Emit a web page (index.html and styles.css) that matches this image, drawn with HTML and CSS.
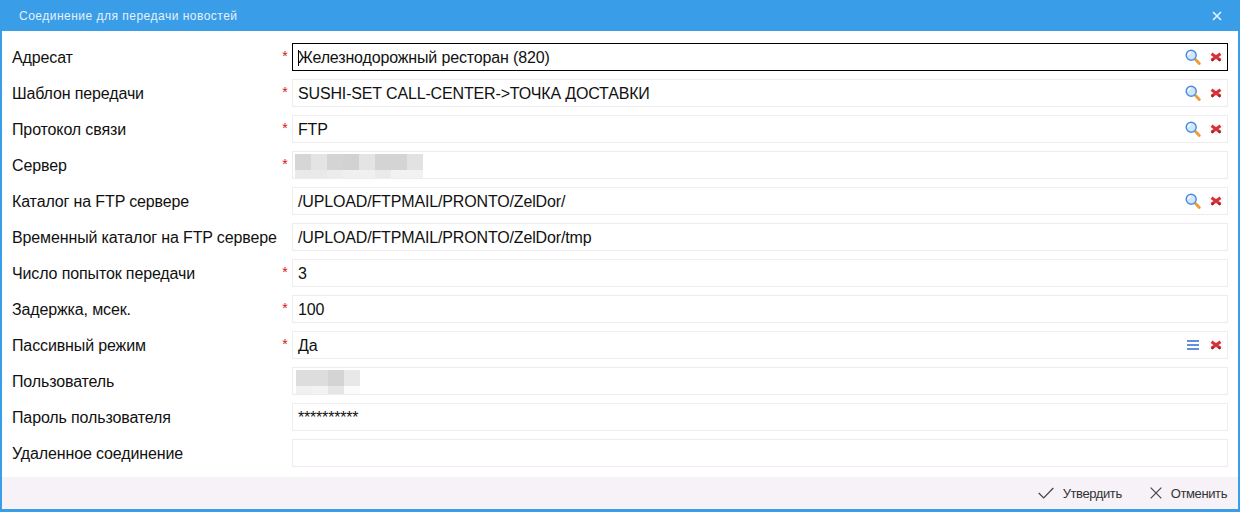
FILE: index.html
```
<!DOCTYPE html>
<html lang="ru">
<head>
<meta charset="utf-8">
<title>Соединение для передачи новостей</title>
<link rel="stylesheet" href="styles.css">
</head>
<body>
<svg class="defs" width="0" height="0" aria-hidden="true">
  <defs>
    <symbol id="i-search" viewBox="0 0 16 16">
      <path d="M10.800 10.800l3.500 3.700" fill="none" stroke="#ee9a38" stroke-width="2.800" stroke-linecap="round"/>
      <circle cx="6.200" cy="6.300" r="5" fill="#cfe6fb" stroke="#4a8ddf" stroke-width="1.500"/>
      <path d="M3.200 6.200a3.100 3.100 0 0 1 2.800-3" fill="none" stroke="#fff" stroke-width="1.400"/>
    </symbol>
    <symbol id="i-del" viewBox="0 0 12 12">
      <path d="M1.500 2.800l9 6.400M10.500 2.800l-9 6.400" fill="none" stroke="#dc3038" stroke-width="3"/>
      <path d="M3.500 8.300L1.500 9.800M8.500 8.300l2 1.500" stroke="#8c2a2e" stroke-width="2"/>
    </symbol>
    <symbol id="i-list" viewBox="0 0 12 10">
      <path d="M0 1h12M0 5h12M0 9h12" stroke="#6490d8" stroke-width="1.800"/>
    </symbol>
  </defs>
</svg>
<div class="window">
  <header class="titlebar">
    <span class="title">Соединение для передачи новостей</span>
    <svg class="close" width="10" height="10" viewBox="0 0 10 10"><path d="M1 1l8 8M9 1l-8 8" stroke="#e4f1fc" stroke-width="1.700"/></svg>
  </header>
  <main class="form">
    <div class="row">
      <label class="label">Адресат</label><span class="req">*</span>
      <div class="field focus"><span class="caret"></span><span class="value tight">Железнодорожный ресторан (820)</span>
        <svg class="ic-search"><use href="#i-search"/></svg><svg class="ic-del"><use href="#i-del"/></svg></div>
    </div>
    <div class="row">
      <label class="label">Шаблон передачи</label><span class="req">*</span>
      <div class="field"><span class="value">SUSHI-SET CALL-CENTER-&gt;ТОЧКА ДОСТАВКИ</span>
        <svg class="ic-search"><use href="#i-search"/></svg><svg class="ic-del"><use href="#i-del"/></svg></div>
    </div>
    <div class="row">
      <label class="label">Протокол связи</label><span class="req">*</span>
      <div class="field"><span class="value">FTP</span>
        <svg class="ic-search"><use href="#i-search"/></svg><svg class="ic-del"><use href="#i-del"/></svg></div>
    </div>
    <div class="row">
      <label class="label">Сервер</label><span class="req">*</span>
      <div class="field">
        <div class="mosaic server">
          <i class="c d6"></i><i class="c e4"></i><i class="c d4"></i><i class="c d2"></i><i class="c e4"></i><i class="c d4"></i><i class="c d4"></i><i class="c e2"></i>
          <i class="c e9"></i><i class="c e9"></i><i class="c ec"></i><i class="c f0"></i><i class="c f0"></i><i class="c ea"></i><i class="c f2"></i><i class="c f2"></i>
        </div>
      </div>
    </div>
    <div class="row">
      <label class="label">Каталог на FTP сервере</label><span class="req"></span>
      <div class="field"><span class="value">/UPLOAD/FTPMAIL/PRONTO/ZelDor/</span>
        <svg class="ic-search"><use href="#i-search"/></svg><svg class="ic-del"><use href="#i-del"/></svg></div>
    </div>
    <div class="row">
      <label class="label">Временный каталог на FTP сервере</label><span class="req"></span>
      <div class="field"><span class="value">/UPLOAD/FTPMAIL/PRONTO/ZelDor/tmp</span></div>
    </div>
    <div class="row">
      <label class="label">Число попыток передачи</label><span class="req">*</span>
      <div class="field"><span class="value">3</span></div>
    </div>
    <div class="row">
      <label class="label">Задержка, мсек.</label><span class="req">*</span>
      <div class="field"><span class="value">100</span></div>
    </div>
    <div class="row">
      <label class="label">Пассивный режим</label><span class="req">*</span>
      <div class="field"><span class="value">Да</span>
        <svg class="ic-list"><use href="#i-list"/></svg><svg class="ic-del"><use href="#i-del"/></svg></div>
    </div>
    <div class="row">
      <label class="label">Пользователь</label><span class="req"></span>
      <div class="field">
        <div class="mosaic user">
          <i class="c dd"></i><i class="c dd"></i><i class="c d4"></i><i class="c e8"></i>
          <i class="c f0"></i><i class="c f3"></i><i class="c e6"></i><i class="c fb"></i>
        </div>
      </div>
    </div>
    <div class="row">
      <label class="label">Пароль пользователя</label><span class="req"></span>
      <div class="field"><span class="value pass">**********</span></div>
    </div>
    <div class="row">
      <label class="label">Удаленное соединение</label><span class="req"></span>
      <div class="field"></div>
    </div>
  </main>
  <footer class="footer">
    <button class="btn" type="button">
      <svg width="16" height="12" viewBox="0 0 16 12"><path d="M.7 6l5 5L15.300 1" fill="none" stroke="#444" stroke-width="1.200"/></svg>Утвердить
    </button>
    <button class="btn" type="button">
      <svg width="12" height="12" viewBox="0 0 12 12"><path d="M.7.7l10.600 10.600M11.300.7L.7 11.300" fill="none" stroke="#444" stroke-width="1.200"/></svg>Отменить
    </button>
  </footer>
</div>
</body>
</html>
```
FILE: styles.css
```
* { box-sizing: border-box; }
html, body { margin: 0; padding: 0; }
body {
  width: 1240px;
  height: 512px;
  overflow: hidden;
  background: #fff;
  font-family: "Liberation Sans", Arial, sans-serif;
  color: #000;
}
.defs { position: absolute; }
.window {
  width: 1240px;
  height: 512px;
  display: flex;
  flex-direction: column;
  border: 2px solid #3a9de8;
  border-top: 0;
  border-bottom-width: 3px;
  background: #fff;
}
.titlebar {
  height: 31px;
  margin: 0 -2px;
  padding: 0 18px 0 19px;
  background: #3a9de8;
  display: flex;
  align-items: center;
  justify-content: space-between;
  flex: none;
}
.title {
  color: #e4f1fc;
  font-size: 12px;
  letter-spacing: .49px;
}
.form {
  flex: 1;
  padding: 12px 10px 0 10px;
  display: flex;
  flex-direction: column;
  gap: 8px;
}
.row {
  display: flex;
  align-items: center;
  height: 28px;
  flex: none;
}
.label {
  width: 268px;
  padding-top: 2px;
  font-size: 16px;
  letter-spacing: -.13px;
  color: #111;
  white-space: nowrap;
  flex: none;
}
.req {
  width: 10px;
  margin-right: 2px;
  color: #e01010;
  font-size: 14px;
  flex: none;
  position: relative;
  top: -1px;
  text-align: center;
}
.field {
  flex: 1;
  height: 28px;
  border: 1px solid #eeecee;
  display: flex;
  align-items: center;
  padding: 0 5px;
  position: relative;
  overflow: hidden;
}
.field.focus {
  border-color: #000;
}
.value {
  flex: 1;
  padding-top: 2px;
  font-size: 16px;
  letter-spacing: -.15px;
  color: #111;
  white-space: nowrap;
}
.value.pass { letter-spacing: -.2px; }
.caret {
  position: absolute;
  left: 5px;
  top: 6px;
  width: 1px;
  height: 16px;
  background: #000;
}
.ic-search { width: 16px; height: 16px; flex: none; }
.ic-list { width: 12px; height: 10px; flex: none; margin: 0 2px; }
.ic-del { width: 12px; height: 12px; flex: none; margin-left: 9px; }
.mosaic {
  display: grid;
  grid-auto-rows: 16px;
  grid-template-columns: repeat(auto-fill, 16px);
  position: absolute;
}
.mosaic.server { left: 2px; top: 2px; width: 128px; }
.mosaic.user { left: 3px; top: 2px; width: 64px; }
.c { display: block; }
.d2 { background: #d2d2d2; }
.d4 { background: #d4d4d4; }
.d6 { background: #d6d6d6; }
.dd { background: #dddddd; }
.e2 { background: #e2e2e2; }
.e4 { background: #e4e4e4; }
.e6 { background: #e6e6e6; }
.e8 { background: #e8e8e8; }
.e9 { background: #e9e9e9; }
.ea { background: #eaeaea; }
.ec { background: #ececec; }
.f0 { background: #f0f0f0; }
.f2 { background: #f2f2f2; }
.f3 { background: #f3f3f3; }
.fb { background: #fbfbfb; }
.footer {
  height: 32px;
  flex: none;
  background: #f6f2f7;
  display: flex;
  justify-content: flex-end;
  align-items: center;
  gap: 28px;
  padding: 0 11px 0 0;
}
.btn {
  border: 0;
  background: none;
  padding: 0;
  font: 13px "Liberation Sans", Arial, sans-serif;
  letter-spacing: -.4px;
  color: #333;
  display: flex;
  align-items: center;
  gap: 9px;
}
```
